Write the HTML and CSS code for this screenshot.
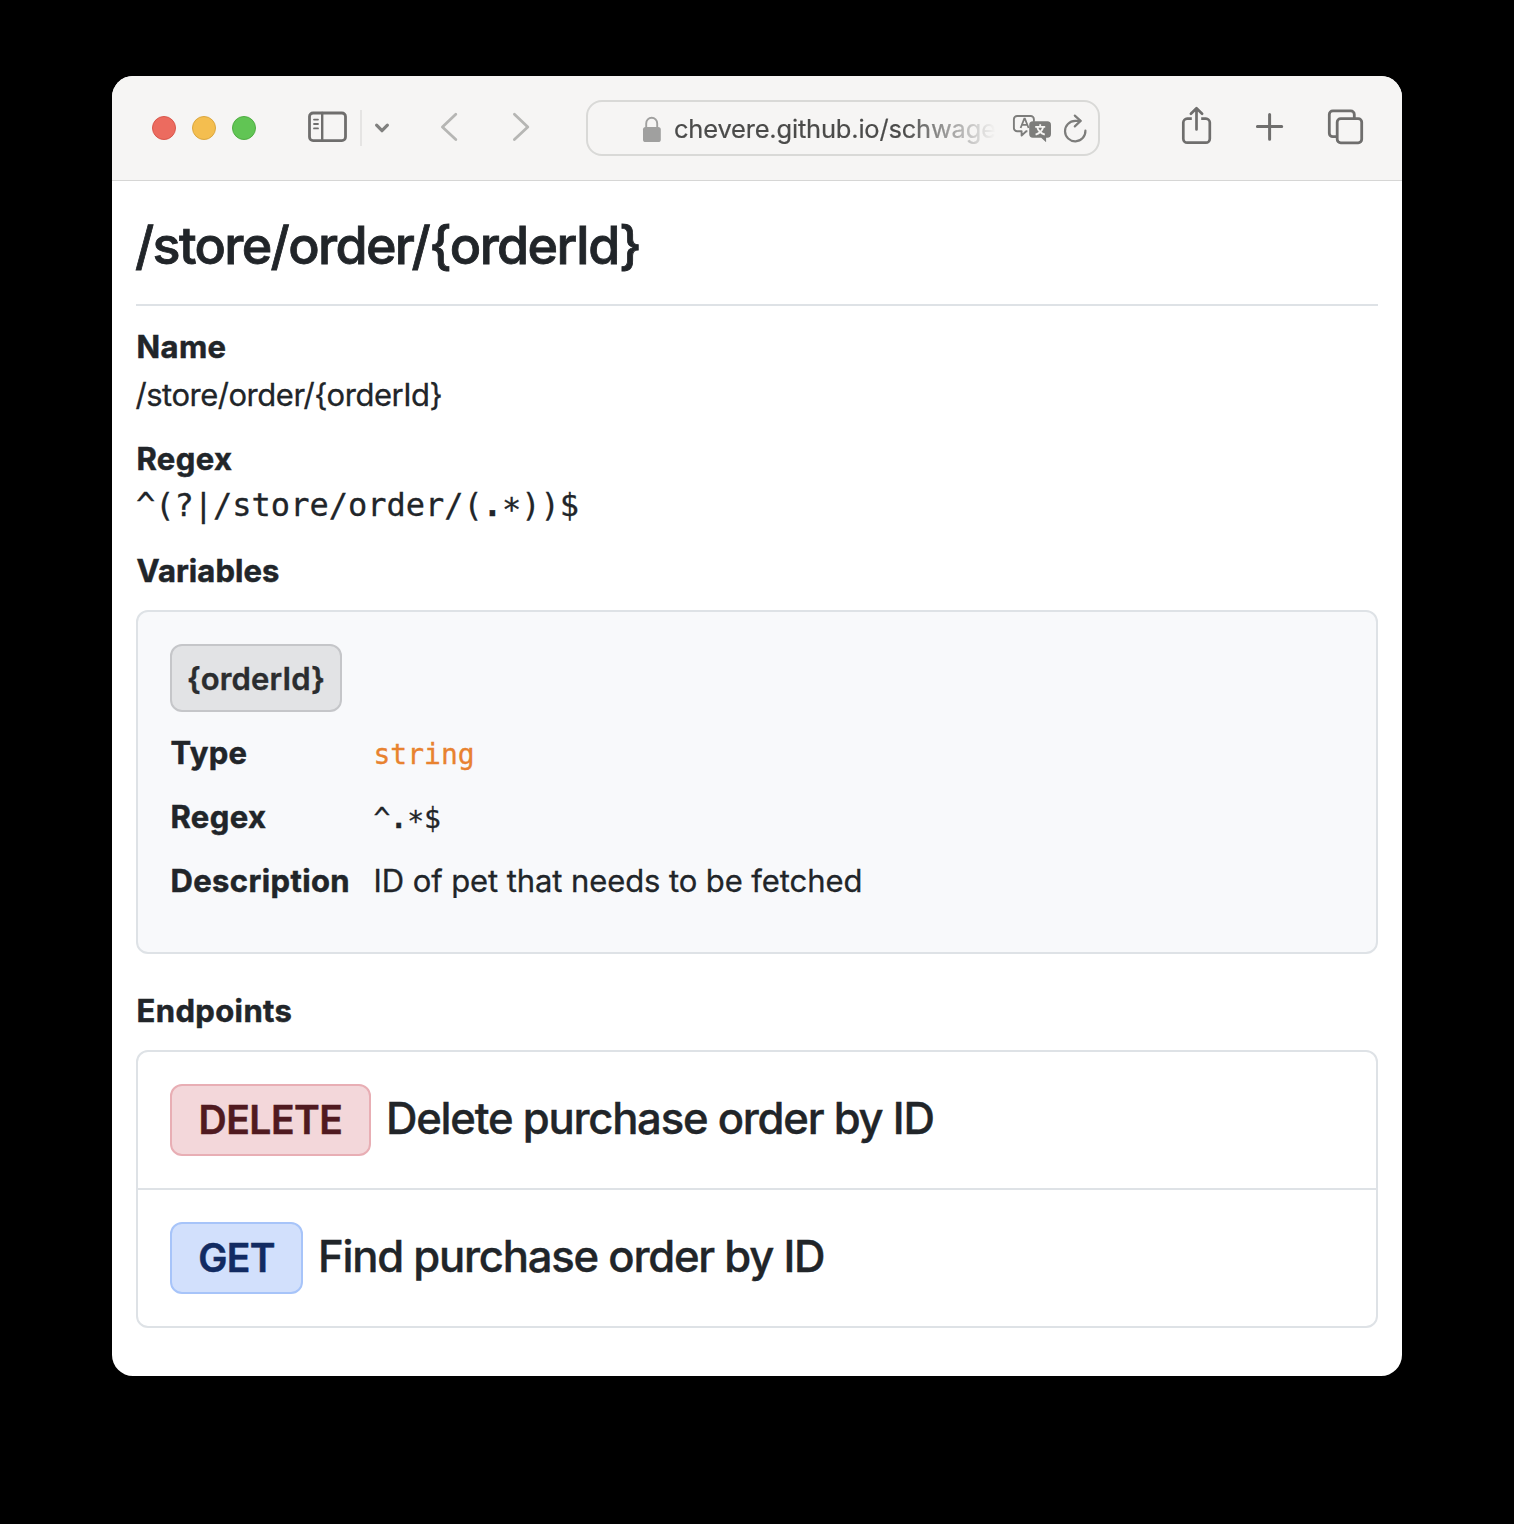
FILE: index.html
```html
<!DOCTYPE html>
<html lang="en">
<head>
<meta charset="utf-8">
<title>/store/order/{orderId}</title>
<link rel="stylesheet" href="styles.css">
</head>
<body>
<div class="window">
  <header class="toolbar">
    <div class="lights">
      <span class="light light-close"></span>
      <span class="light light-minimize"></span>
      <span class="light light-zoom"></span>
    </div>
    <svg class="icon sidebar" width="44" height="48" viewBox="0 0 44 48" stroke-width="2.8">
      <rect x="3.5" y="9" width="36" height="27.6" rx="3.6"/>
      <path d="M16.2 9v27.6" stroke-width="2.4"/>
      <path d="M8 15.6h4M8 20h4M8 24.4h4" stroke-width="1.8"/>
    </svg>
    <span class="divider"></span>
    <svg class="icon chevron" width="20" height="48" viewBox="0 0 20 48" stroke-width="3.2">
      <path d="M4.6 21.2l5.4 5.5 5.4-5.5"/>
    </svg>
    <svg class="icon nav back" width="22" height="48" viewBox="0 0 22 48" stroke-width="2.8">
      <path d="M17.8 10.2L4.4 23l13.4 12.6"/>
    </svg>
    <svg class="icon nav forward" width="22" height="48" viewBox="0 0 22 48" stroke-width="2.8">
      <path d="M4.4 10.2L17.8 23 4.4 35.6"/>
    </svg>
    <div class="address">
      <svg class="lock" width="22" height="48" viewBox="0 0 22 48">
        <path d="M5.2 24v-4.6a5.5 5.7 0 0 1 11 0V24" fill="none" stroke="#a0a09f" stroke-width="1.9"/>
        <rect x="2" y="23" width="17.8" height="15" rx="2.6" fill="#a0a09f"/>
      </svg>
      <span class="url">chevere.github.io/schwage</span>
      <svg class="translate" width="42" height="48" viewBox="0 0 42 48">
        <path d="M16.4 27.2h-1.2l-4.6 4.4v-4.4H6.2a3.3 3.3 0 0 1-3.3-3.3v-8.6A3.3 3.3 0 0 1 6.2 12h13.4a3.3 3.3 0 0 1 3.3 3.3v2.4" fill="none" stroke="#7d7d7b" stroke-width="1.9" stroke-linejoin="round"/>
        <path d="M9.6 24l3.7-9.4h.6l3.7 9.4M10.9 20.8h5.4" fill="none" stroke="#7d7d7b" stroke-width="1.8"/>
        <path d="M21.9 17.2h14.4a3.7 3.7 0 0 1 3.7 3.7V30a3.7 3.7 0 0 1-3.7 3.7h-1.2v4.6l-4.9-4.6h-8.3a3.7 3.7 0 0 1-3.7-3.7v-9.1a3.7 3.7 0 0 1 3.7-3.7z" fill="#7d7d7b"/>
        <path d="M29.2 20.2v2.3M24.2 22.8h10M32.2 23c-.8 3.4-3.4 6.2-7.6 7.6M26.2 23c.8 3.4 3.4 6.2 7.6 7.6" fill="none" stroke="#f6f5f3" stroke-width="1.8"/>
      </svg>
      <svg class="reload" width="28" height="48" viewBox="0 0 28 48" fill="none" stroke="#7d7d7b" stroke-width="2.2" stroke-linecap="round" stroke-linejoin="round">
        <path d="M23.4 26.6a10.2 10.2 0 1 1-10.2-9.7h5.2"/>
        <path d="M12.8 11.6l5.8 5.3-5.8 5.5"/>
      </svg>
    </div>
    <svg class="icon share" width="34" height="48" viewBox="0 0 34 48" stroke-width="2.7">
      <path d="M11.8 14.7H7.2a3.9 3.9 0 0 0-3.9 3.9v16.2a3.9 3.9 0 0 0 3.9 3.9h18.7a3.9 3.9 0 0 0 3.9-3.9V18.6a3.9 3.9 0 0 0-3.9-3.9h-4.7" stroke-linecap="butt"/>
      <path d="M16.5 25.4V4.6M10.9 9.8l5.6-5.5 5.6 5.5"/>
    </svg>
    <svg class="icon plus" width="32" height="48" viewBox="0 0 32 48" stroke-width="3">
      <path d="M15.6 10.4v24.8M3.4 22.6h24.3"/>
    </svg>
    <svg class="icon tabs" width="40" height="48" viewBox="0 0 40 48" stroke-width="2.8">
      <path d="M10 32.7H6.8a3.5 3.5 0 0 1-3.5-3.5V10.4a3.5 3.5 0 0 1 3.5-3.5h18a3.5 3.5 0 0 1 3.5 3.5v3.4"/>
      <rect x="11.2" y="14.6" width="24.5" height="24.2" rx="3.5"/>
    </svg>
  </header>
  <main class="content">
    <h1 class="title">/store/order/{orderId}</h1>
    <section class="field">
      <h2 class="label">Name</h2>
      <p class="path">/store/order/{orderId}</p>
    </section>
    <section class="field">
      <h2 class="label">Regex</h2>
      <p class="regex">^(?|/store/order/(<span class="dot">.</span><span class="star">*</span>))$</p>
    </section>
    <section class="field">
      <h2 class="label label-variables">Variables</h2>
      <div class="card variable">
        <span class="tag">{orderId}</span>
        <dl class="props">
          <dt class="label">Type</dt><dd class="value code type">string</dd>
          <dt class="label">Regex</dt><dd class="value code">^<span class="dot">.</span><span class="star">*</span>$</dd>
          <dt class="label">Description</dt><dd class="value">ID of pet that needs to be fetched</dd>
        </dl>
      </div>
    </section>
    <section class="field endpoints">
      <h2 class="label">Endpoints</h2>
      <ul class="card list">
        <li class="endpoint"><span class="method method-delete">DELETE</span><h3 class="summary">Delete purchase order by ID</h3></li>
        <li class="endpoint"><span class="method method-get">GET</span><h3 class="summary">Find purchase order by ID</h3></li>
      </ul>
    </section>
  </main>
</div>
</body>
</html>
```

FILE: styles.css
```css
* { box-sizing: border-box; margin: 0; padding: 0; }

body {
  min-height: 1524px;
  padding: 76px 112px 148px;
  background: #000;
  color: #212529;
  font: 400 31px/48px Inter, "Liberation Sans", sans-serif;
}

.window {
  height: 1300px;
  border-radius: 21px;
  background: #fff;
  overflow: hidden;
}

/* Browser toolbar */
.toolbar {
  display: flex;
  align-items: center;
  height: 105px;
  padding: 0 36px 0 40px;
  background: #f6f5f4;
  border-bottom: 1px solid #d6d6d5;
}
.toolbar > *, .address > * { flex: none; }
.lights { display: flex; gap: 16px; }
.light { width: 24px; height: 24px; border-radius: 50%; border: 1px solid; }
.light-close { background: #ec6b5f; border-color: #d9574c; }
.light-minimize { background: #f4be4f; border-color: #dba73f; }
.light-zoom { background: #61c554; border-color: #50ad43; }
.icon {
  fill: none;
  stroke: #6f6e6d;
  stroke-linecap: round;
  stroke-linejoin: round;
}
.sidebar { margin-left: 50px; }
.divider { width: 2px; height: 36px; margin-left: 10px; background: #e5e4e3; }
.chevron { margin-left: 10px; stroke: #80807f; }
.nav { stroke: #b6b6b4; }
.back { margin-left: 46px; }
.forward { margin-left: 50px; }
.share { margin-left: 80px; }
.plus, .tabs { margin-left: 40px; }

.address {
  display: flex;
  align-items: center;
  width: 514px;
  height: 56px;
  margin-left: 54px;
  padding-left: 53px;
  border: 2px solid #d9d9d7;
  border-radius: 16px;
}
.url {
  width: 324px;
  margin-left: 11px;
  padding-top: 2px;
  overflow: hidden;
  color: #4b4b4a;
  font-size: 25.5px;
  line-height: 46px;
  letter-spacing: -0.2px;
  white-space: nowrap;
  -webkit-text-stroke: 0.2px #4b4b4a;
  -webkit-mask-image: linear-gradient(90deg, #000 230px, transparent 322px);
  mask-image: linear-gradient(90deg, #000 230px, transparent 322px);
}
.translate { margin-left: 13px; }
.reload { margin-left: 9px; }

/* Page */
.content { padding: 33px 24px 0; }
.title {
  box-sizing: content-box;
  height: 64px;
  padding-bottom: 26px;
  margin-bottom: 17px;
  border-bottom: 2px solid #dee2e6;
  font-size: 52px;
  font-weight: 500;
  line-height: 64px;
  letter-spacing: -1.65px;
  text-indent: -1px;
  -webkit-text-stroke: 0.8px #212529;
}
.field { margin-bottom: 16px; }
.label {
  font-size: 31px;
  font-weight: 700;
  letter-spacing: 0.38px;
  line-height: 48px;
  text-indent: 0.5px;
  -webkit-text-stroke: 0.5px #212529;
}
.label-variables { letter-spacing: 0.07px; }
.path { letter-spacing: -0.48px; text-indent: -0.5px; -webkit-text-stroke: 0.3px #212529; }
.regex {
  margin-bottom: 20px;
  font: 32px/44px "DejaVu Sans Mono", monospace;
  -webkit-text-stroke: 0.3px #212529;
}
.dot { font-weight: 700; }
.star { line-height: 0; vertical-align: -0.12em; }

.card { margin-top: 15px; border: 2px solid #dee2e6; border-radius: 12px; }
.variable { height: 344px; padding: 32px; background: #f8f9fb; }
.tag {
  display: block;
  width: 172px;
  height: 68px;
  border: 2px solid #c5c6c9;
  border-radius: 12px;
  background: #e2e3e5;
  color: #2b2d2f;
  font-weight: 600;
  line-height: 64px;
  letter-spacing: 0.15px;
  padding-top: 1px;
  text-align: center;
  -webkit-text-stroke: 0.4px #2b2d2f;
}
.props {
  display: grid;
  grid-template-columns: 203.5px 1fr;
  grid-auto-rows: 48px;
  row-gap: 16px;
  align-items: baseline;
  margin-top: 17px;
}
.value { letter-spacing: -0.09px; -webkit-text-stroke: 0.3px; }
.code { font: 28px/44px "DejaVu Sans Mono", monospace; letter-spacing: 0; }
.type { color: #e8822f; }

.endpoints { margin-top: 33px; }
.list { list-style: none; }
.endpoint {
  display: flex;
  align-items: center;
  height: 136px;
  padding: 0 32px;
}
.endpoint + .endpoint { height: 138px; border-top: 2px solid #dee2e6; }
.method {
  height: 72px;
  border: 2px solid;
  border-radius: 12px;
  font-size: 39px;
  font-weight: 600;
  line-height: 68px;
  text-align: center;
  -webkit-text-stroke: 0.5px;
}
.method-delete {
  width: 201px;
  background: #f3d7da;
  border-color: #e8aeb4;
  color: #501a20;
  letter-spacing: -0.5px;
}
.method-get {
  width: 133px;
  background: #d2e0fc;
  border-color: #a7c4f9;
  color: #122b62;
  letter-spacing: -0.66px;
}
.summary {
  margin-left: 15px;
  margin-top: -3px;
  font-size: 43.6px;
  font-weight: 500;
  letter-spacing: -1.23px;
  white-space: nowrap;
  -webkit-text-stroke: 0.4px #212529;
}
```
